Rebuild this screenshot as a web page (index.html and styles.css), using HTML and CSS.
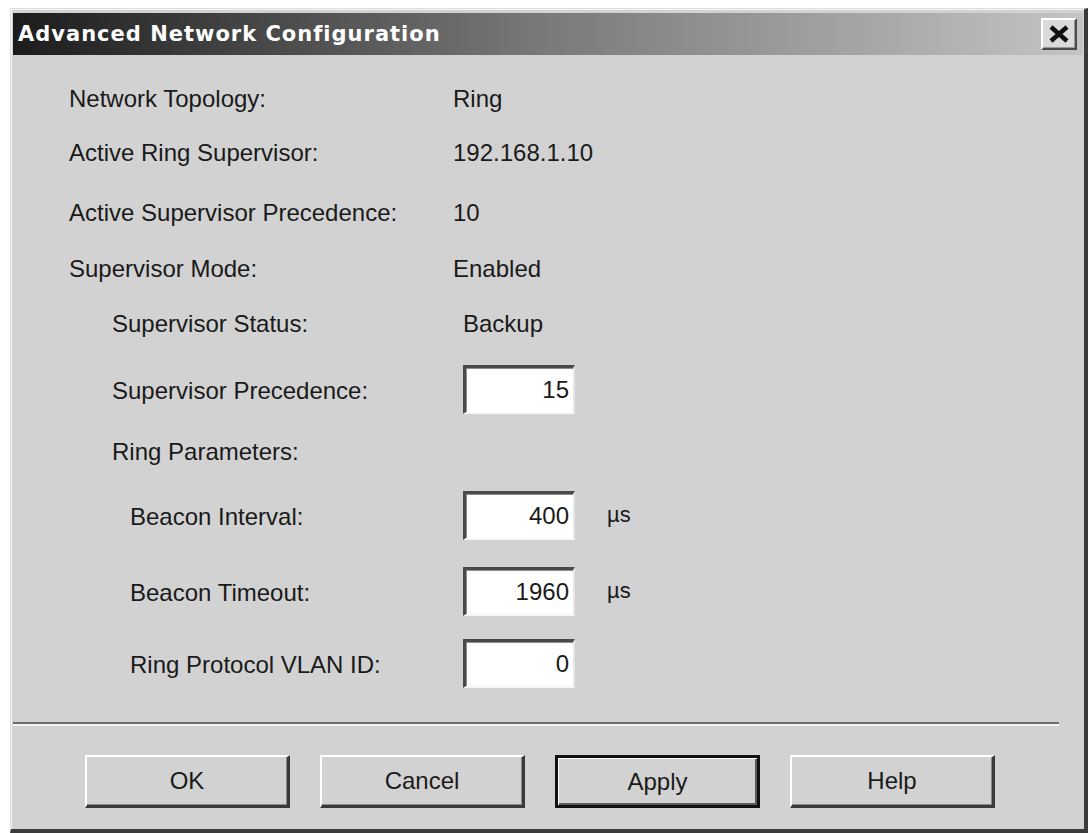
FILE: index.html
```html
<!DOCTYPE html>
<html>
<head>
<meta charset="utf-8">
<title>Advanced Network Configuration</title>
<link rel="stylesheet" href="styles.css">
</head>
<body>
<div class="window">
  <div class="titlebar">
    <span class="title">Advanced Network Configuration</span>
    <div class="close">
      <svg width="22" height="18" viewBox="0 0 22 18"><path d="M3 2 L19 16 M19 2 L3 16" stroke="#111" stroke-width="4.5" fill="none"/></svg>
    </div>
  </div>
  <div class="content">
    <div class="fields">
      <div class="row"><span class="lbl">Network Topology:</span><span class="val">Ring</span></div>
      <div class="row"><span class="lbl">Active Ring Supervisor:</span><span class="val">192.168.1.10</span></div>
      <div class="row"><span class="lbl">Active Supervisor Precedence:</span><span class="val">10</span></div>
      <div class="row"><span class="lbl">Supervisor Mode:</span><span class="val">Enabled</span></div>
      <div class="row"><span class="lbl ind1">Supervisor Status:</span><span class="val in">Backup</span></div>
      <div class="row"><span class="lbl ind1">Supervisor Precedence:</span><span class="edit in">15</span></div>
      <div class="row"><span class="lbl ind1">Ring Parameters:</span></div>
      <div class="row"><span class="lbl ind2">Beacon Interval:</span><span class="edit in">400</span><span class="unit">µs</span></div>
      <div class="row"><span class="lbl ind2">Beacon Timeout:</span><span class="edit in">1960</span><span class="unit">µs</span></div>
      <div class="row"><span class="lbl ind2">Ring Protocol VLAN ID:</span><span class="edit in">0</span></div>
    </div>
    <div class="sep"></div>
    <div class="buttons">
      <div class="btn">OK</div>
      <div class="btn">Cancel</div>
      <div class="btn default">Apply</div>
      <div class="btn">Help</div>
    </div>
  </div>
</div>
</body>
</html>
```

FILE: styles.css
```css
html, body {
  margin: 0;
  padding: 0;
  background: #ffffff;
}
body {
  font-family: "Liberation Sans", Arial, sans-serif;
  color: #1a1a1a;
  overflow: hidden;
}
.window {
  box-sizing: border-box;
  margin: 8px 0 0 10px;
  width: 1078px;
  height: 825px;
  background: #d2d2d2;
  border-top: 1px solid #dedede;
  border-left: 1px solid #dedede;
  border-right: 4px solid #3a3a3a;
  border-bottom: 4px solid #3a3a3a;
  box-shadow: inset 1px 1px 0 #f4f4f4;
  padding: 4px 1px 0 2px;
  display: flex;
  flex-direction: column;
}
.titlebar {
  height: 42px;
  flex: none;
  background: linear-gradient(90deg, #1c1c1c 0%, #7a7a7a 50%, #c4c4c4 100%);
  display: flex;
  align-items: center;
  justify-content: space-between;
  padding: 0 6px 0 5px;
}
.title {
  font-family: "DejaVu Sans", sans-serif;
  font-weight: bold;
  font-size: 21px;
  letter-spacing: 1px;
  color: #ffffff;
}
.close {
  box-sizing: border-box;
  width: 36px;
  height: 32px;
  background: #dadada;
  border-top: 2px solid #ffffff;
  border-left: 2px solid #ffffff;
  border-right: 2px solid #4a4a4a;
  border-bottom: 2px solid #4a4a4a;
  box-shadow: inset -1px -1px 0 #9a9a9a;
  display: flex;
  align-items: center;
  justify-content: center;
}
.content {
  flex: 1;
  display: flex;
  flex-direction: column;
  padding-top: 17px;
}
.fields {
  display: grid;
  grid-template-rows: 54px 54px 66px 46px 64px 70px 52px 78px 74px 70px;
  padding-left: 56px;
}
.row {
  display: flex;
  align-items: center;
  font-size: 24px;
}
.lbl {
  box-sizing: border-box;
  width: 384px;
  flex: none;
}
.ind1 { padding-left: 43px; }
.ind2 { padding-left: 61px; }
.val.in { padding-left: 10px; }
.edit {
  box-sizing: border-box;
  margin-left: 10px;
  margin-bottom: 4px;
  width: 112px;
  height: 49px;
  background: #ffffff;
  border-top: 3px solid #4a4a4a;
  border-left: 3px solid #4a4a4a;
  border-right: 2px solid #e6e6e6;
  border-bottom: 2px solid #f6f6f6;
  box-shadow: inset 1px 1px 0 #8c8c8c;
  display: flex;
  align-items: center;
  justify-content: flex-end;
  padding-right: 4px;
  font-size: 24px;
}
.unit {
  margin-left: 32px;
  margin-bottom: 4px;
  font-size: 22px;
}
.sep {
  margin-top: 22px;
  margin-right: 24px;
  border-top: 2px solid #6c6c6c;
  border-bottom: 2px solid #f4f4f4;
}
.buttons {
  display: flex;
  gap: 30px;
  padding-left: 72px;
  margin-top: 29px;
}
.btn {
  box-sizing: border-box;
  width: 205px;
  height: 53px;
  background: #d2d2d2;
  border-top: 2px solid #ffffff;
  border-left: 2px solid #ffffff;
  border-right: 3px solid #3a3a3a;
  border-bottom: 3px solid #3a3a3a;
  box-shadow: inset -1px -1px 0 #8a8a8a;
  display: flex;
  align-items: center;
  justify-content: center;
  font-size: 24px;
}
.btn.default {
  border: 3px solid #111111;
  box-shadow: inset 1px 1px 0 #ffffff, inset -2px -2px 0 #5a5a5a;
}
```
